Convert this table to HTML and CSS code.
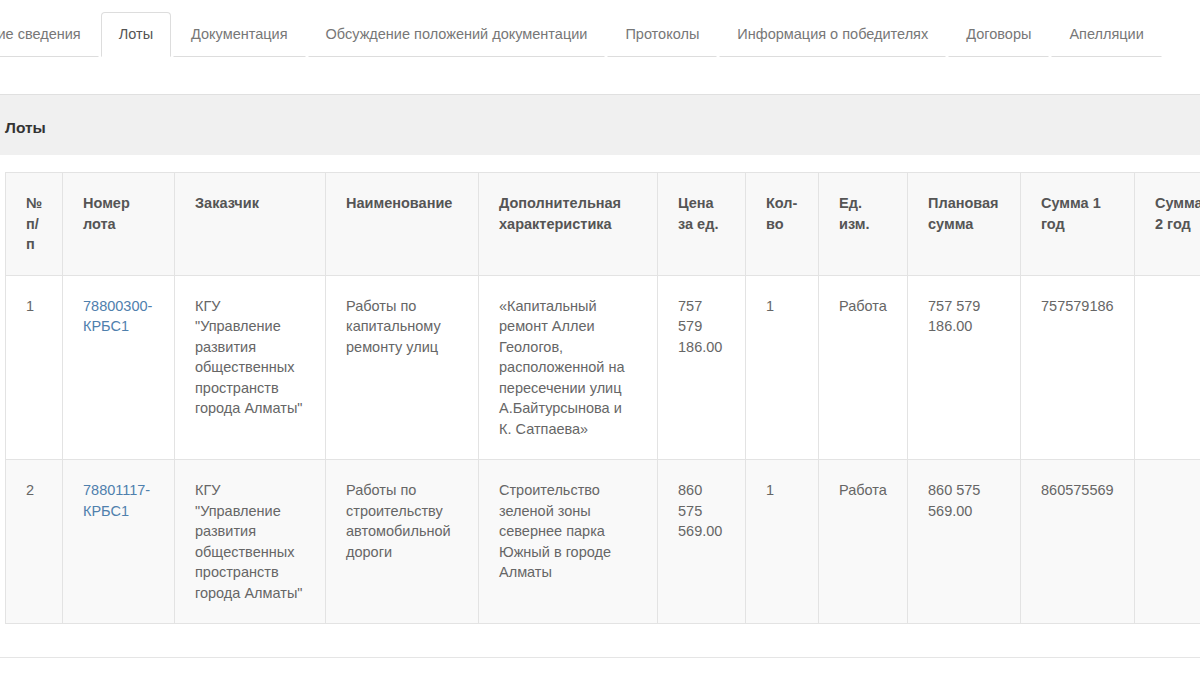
FILE: index.html
```html
<!DOCTYPE html>
<html lang="ru">
<head>
  <meta charset="UTF-8" />
  <title>Лоты</title>
  <link rel="stylesheet" href="styles.css">
</head>
<body>
  <div class="page">
    <ul class="tabs">
      <li><a href="#">Общие сведения</a></li>
      <li class="active"><a href="#">Лоты</a></li>
      <li><a href="#">Документация</a></li>
      <li><a href="#">Обсуждение положений документации</a></li>
      <li><a href="#">Протоколы</a></li>
      <li><a href="#">Информация о победителях</a></li>
      <li><a href="#">Договоры</a></li>
      <li><a href="#">Апелляции</a></li>
    </ul>

    <div class="panel">
      <div class="panel-heading">Лоты</div>
      <div class="panel-body">
        <table class="lots">
          <colgroup>
            <col style="width:57px">
            <col style="width:112px">
            <col style="width:151px">
            <col style="width:153px">
            <col style="width:179px">
            <col style="width:88px">
            <col style="width:73px">
            <col style="width:89px">
            <col style="width:113px">
            <col style="width:114px">
            <col style="width:100px">
            <col style="width:100px">
          </colgroup>
          <thead>
            <tr>
              <th>№ п/п</th>
              <th>Номер лота</th>
              <th>Заказчик</th>
              <th>Наименование</th>
              <th>Дополнительная характеристика</th>
              <th>Цена за ед.</th>
              <th>Кол-во</th>
              <th>Ед. изм.</th>
              <th>Плановая сумма</th>
              <th>Сумма 1 год</th>
              <th>Сумма 2 год</th>
              <th>Сумма 3 год</th>
            </tr>
          </thead>
          <tbody>
            <tr>
              <td>1</td>
              <td><a href="#">78800300-КРБС1</a></td>
              <td>КГУ "Управление развития общественных пространств города Алматы"</td>
              <td>Работы по капитальному ремонту улиц</td>
              <td>«Капитальный ремонт Аллеи Геологов, расположенной на пересечении улиц А.Байтурсынова и К.&nbsp;Сатпаева»</td>
              <td>757 579 186.00</td>
              <td>1</td>
              <td>Работа</td>
              <td>757 579 186.00</td>
              <td>757579186</td>
              <td></td>
              <td></td>
            </tr>
            <tr>
              <td>2</td>
              <td><a href="#">78801117-КРБС1</a></td>
              <td>КГУ "Управление развития общественных пространств города Алматы"</td>
              <td>Работы по строительству автомобильной дороги</td>
              <td>Строительство зеленой зоны севернее парка Южный в городе Алматы</td>
              <td>860 575 569.00</td>
              <td>1</td>
              <td>Работа</td>
              <td>860 575 569.00</td>
              <td>860575569</td>
              <td></td>
              <td></td>
            </tr>
          </tbody>
        </table>
      </div>
    </div>
  </div>
</body>
</html>
```

FILE: styles.css
```css
body {
  margin: 0;
  overflow: hidden;
  background: #fff;
  font-family: "Liberation Sans", Arial, sans-serif;
  font-size: 14.5px;
  line-height: 20.5px;
  color: #666;
}
a {
  text-decoration: none;
}
.page {
  margin-left: -10px;
  width: 1600px;
}
.tabs {
  display: flex;
  list-style: none;
  margin: 12px 0 0 -42px;
  padding: 0;
}
.tabs li {
  margin-right: 2px;
}
.tabs a {
  display: block;
  padding: 0 17px;
  height: 43px;
  line-height: 43px;
  color: #777;
  border: 1px solid transparent;
  border-bottom-color: #ddd;
  border-radius: 4px 4px 0 0;
}
.tabs .active a {
  color: #555;
  border-color: #ddd;
  border-bottom-color: transparent;
}
.panel {
  margin-top: 37px;
  border-bottom: 1px solid #e5e5e5;
}
.panel-heading {
  height: 54px;
  padding: 6px 15px 0;
  display: flex;
  align-items: center;
  background: #f0f0f0;
  border-top: 1px solid #e0e0e0;
  font-size: 15.5px;
  font-weight: bold;
  color: #333;
}
.panel-body {
  padding: 17px 15px 33px;
}
.lots {
  table-layout: fixed;
  border-collapse: collapse;
  width: 1329px;
}
.lots th,
.lots td {
  padding: 20px;
  border: 1px solid #e3e3e3;
  text-align: left;
  vertical-align: top;
}
.lots th {
  color: #555;
  font-weight: bold;
  background: #f8f8f8;
}
.lots tbody tr:nth-child(even) {
  background: #f9f9f9;
}
.lots a {
  color: #4f80ad;
}
```
